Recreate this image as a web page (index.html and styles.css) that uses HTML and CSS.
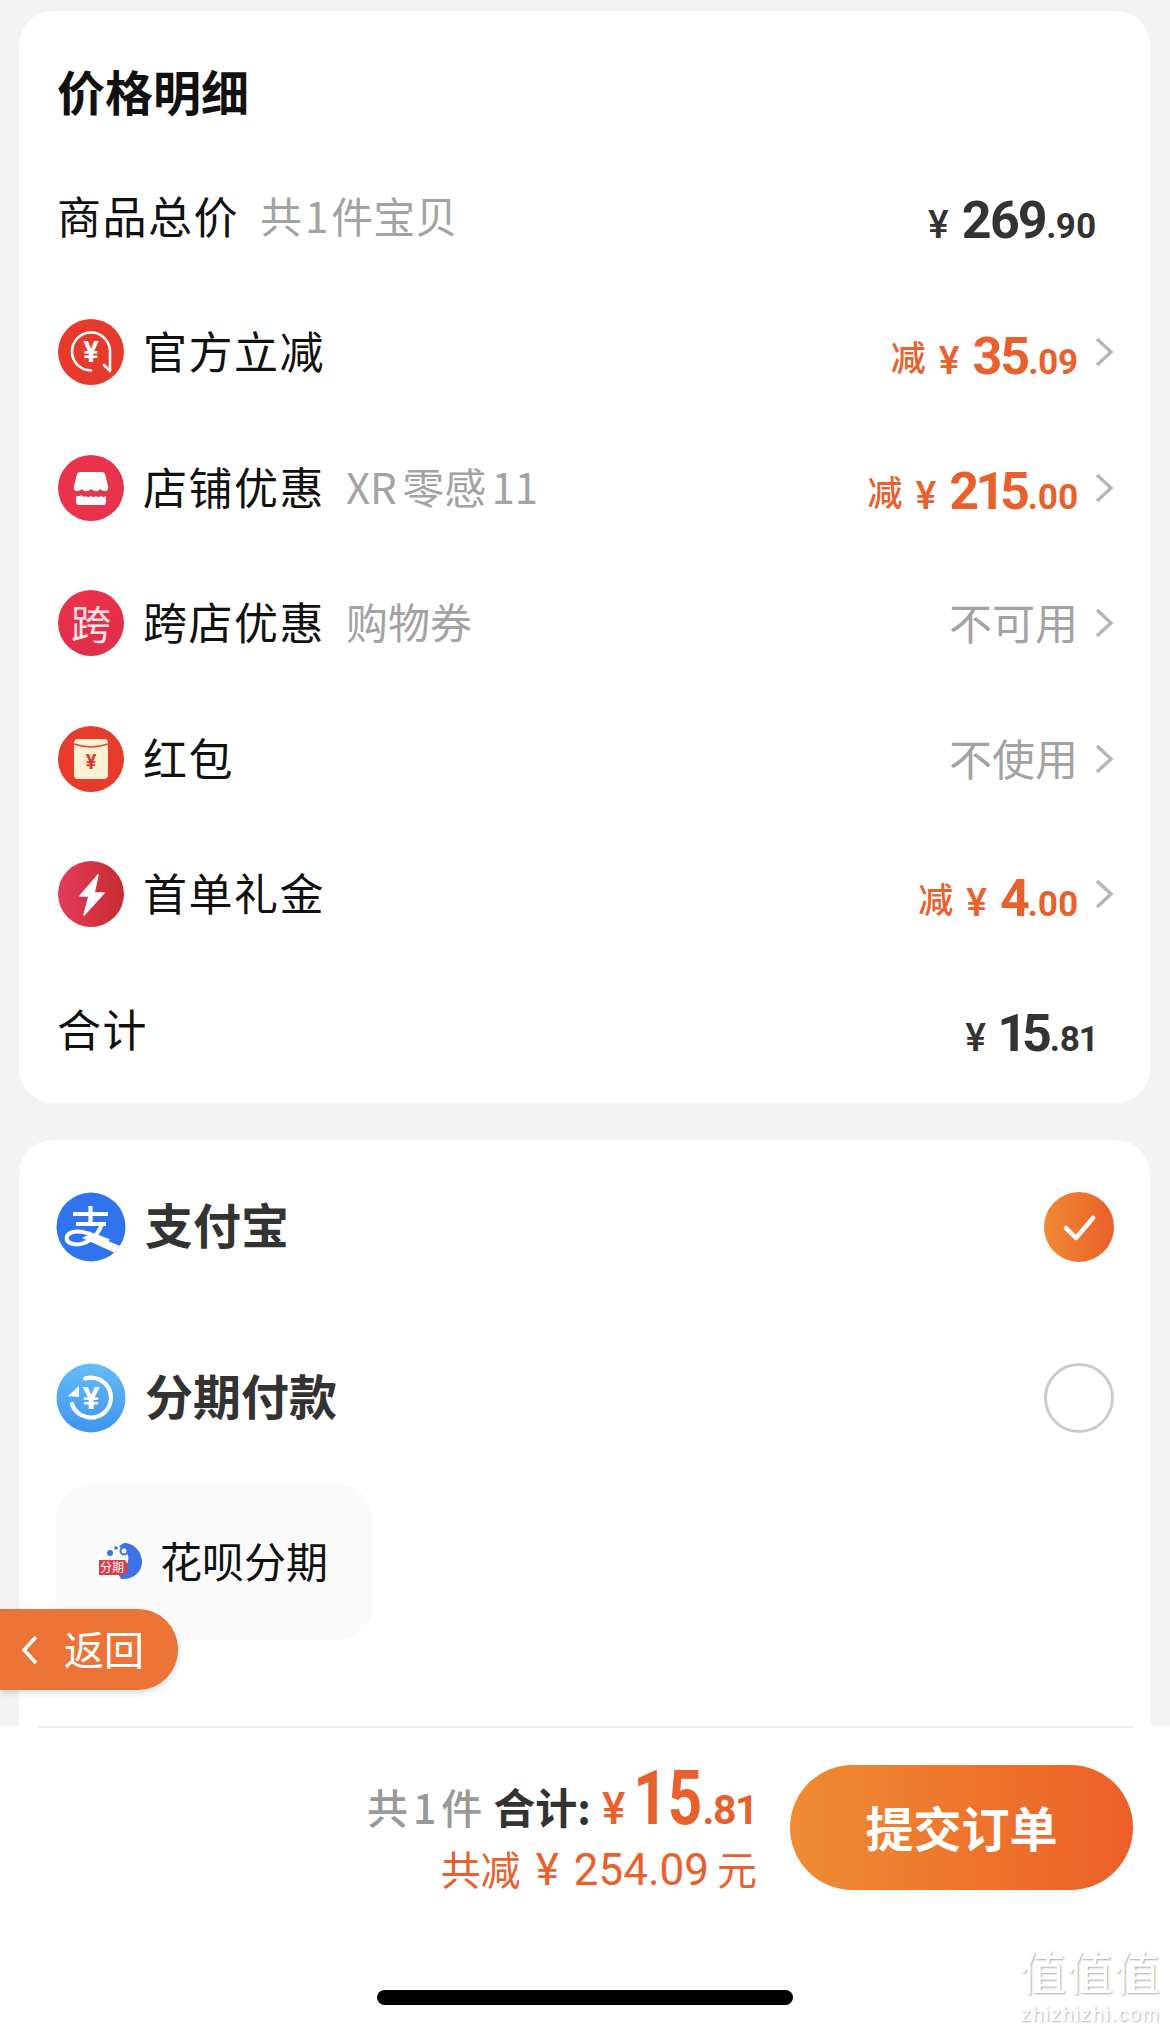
FILE: index.html
```html
<!DOCTYPE html>
<html lang="zh-CN">
<head>
  <meta charset="UTF-8">
  <title>确认订单</title>
  <link rel="stylesheet" href="styles.css">
</head>
<body>
  <div class="page">
    <section class="card price-card">
      <h2 class="card-title">价格明细</h2>

      <div class="row">
        <span class="label">商品总价</span>
        <span class="sub">共<i class="num">1</i>件宝贝</span>
        <span class="price plain"><span class="yen">¥</span><span class="int">269</span><span class="dec">.90</span></span>
      </div>

      <div class="row">
        <svg class="icon" viewBox="0 0 66 66">
          <circle cx="33" cy="33" r="33" fill="#e63a2c"/>
          <path d="M33 51.500a19 19 0 1 1 19-19v19" fill="none" stroke="#fff" stroke-width="2.6" stroke-linecap="round"/>
          <path d="M52 52l-6-6" fill="none" stroke="#fff" stroke-width="2.6" stroke-linecap="round"/>
          <text class="icon-yen" x="33" y="43" font-size="29" fill="#fff">¥</text>
        </svg>
        <span class="label">官方立减</span>
        <span class="price off"><span class="minus">减</span><span class="yen">¥</span><span class="int">35</span><span class="dec">.09</span></span>
        <svg class="chevron" viewBox="0 0 18 30"><path d="M2 2l14 13L2 28"/></svg>
      </div>

      <div class="row">
        <svg class="icon" viewBox="0 0 66 66">
          <circle cx="33" cy="33" r="33" fill="#e8334a"/>
          <path d="M22 17h22q2 0 3 2l3 12q1 5-3 5-3 0-5-2-2 3-5 2-2 0-4-2-2 2-4 2-3 1-5-2-2 2-5 2-4 0-3-5l3-12q1-2 3-2z" fill="#fff"/>
          <path d="M18 41q3 1 5-1 3 3 5 1 2 2 5 0 3 2 5 0 3 2 5 0 2 2 5 0v6q0 3-3 3H21q-3 0-3-3z" fill="#fff"/>
        </svg>
        <span class="label">店铺优惠</span>
        <span class="sub narrow">XR 零感 11</span>
        <span class="price off"><span class="minus">减</span><span class="yen">¥</span><span class="int">215</span><span class="dec">.00</span></span>
        <svg class="chevron" viewBox="0 0 18 30"><path d="M2 2l14 13L2 28"/></svg>
      </div>

      <div class="row">
        <span class="icon badge">跨</span>
        <span class="label">跨店优惠</span>
        <span class="sub">购物券</span>
        <span class="status">不可用</span>
        <svg class="chevron" viewBox="0 0 18 30"><path d="M2 2l14 13L2 28"/></svg>
      </div>

      <div class="row">
        <svg class="icon" viewBox="0 0 66 66">
          <circle cx="33" cy="33" r="33" fill="#e73b2c"/>
          <rect x="16" y="13" width="34" height="40" rx="4" fill="#fdf1d3"/>
          <path d="M16 18q17 6 34 0" fill="none" stroke="#e04a35" stroke-width="1.6"/>
          <text class="icon-yen" x="33" y="43" font-size="20" fill="#d8392b">¥</text>
        </svg>
        <span class="label">红包</span>
        <span class="status">不使用</span>
        <svg class="chevron" viewBox="0 0 18 30"><path d="M2 2l14 13L2 28"/></svg>
      </div>

      <div class="row">
        <svg class="icon" viewBox="0 0 66 66">
          <defs>
            <linearGradient id="boltBg" x1="0" x2="1" y1="0" y2="0">
              <stop offset="0" stop-color="#e33a5c"/>
              <stop offset="1" stop-color="#c72c2f"/>
            </linearGradient>
          </defs>
          <circle cx="33" cy="33" r="33" fill="url(#boltBg)"/>
          <path d="M40 14L22 35h9l-5 19 20-22H36z" fill="#fff" stroke="#fff" stroke-width="1.5" stroke-linejoin="round"/>
        </svg>
        <span class="label">首单礼金</span>
        <span class="price off"><span class="minus">减</span><span class="yen">¥</span><span class="int">4</span><span class="dec">.00</span></span>
        <svg class="chevron" viewBox="0 0 18 30"><path d="M2 2l14 13L2 28"/></svg>
      </div>

      <div class="row">
        <span class="label">合计</span>
        <span class="price plain"><span class="yen">¥</span><span class="int">15</span><span class="dec">.81</span></span>
      </div>
    </section>

    <section class="card pay-card">
      <div class="pay-row">
        <svg class="pay-icon" viewBox="0 0 70 70">
          <clipPath id="payClip"><circle cx="35" cy="35" r="34.500"/></clipPath>
          <circle cx="35" cy="35" r="34.500" fill="#2f74ee"/>
          <g clip-path="url(#payClip)">
            <path d="M17 22h35M20 32h30M34.500 14v18" fill="none" stroke="#fff" stroke-width="4.200"/>
            <path d="M46 32C41 47 27 54 17 52 8 50 9 42 17 40c9-2 20 3 36 9" fill="none" stroke="#fff" stroke-width="4"/>
            <path d="M34 42l38 15-4 8-42-19z" fill="#fff"/>
          </g>
        </svg>
        <span class="pay-name">支付宝</span>
        <span class="radio checked">
          <svg viewBox="0 0 70 70"><path d="M22 36l10 10 17-20" fill="none" stroke="#fff" stroke-width="4.500" stroke-linecap="round" stroke-linejoin="round"/></svg>
        </span>
      </div>

      <div class="pay-row">
        <svg class="pay-icon" viewBox="0 0 70 70">
          <defs>
            <linearGradient id="stageBg" x1="0" x2="0" y1="0" y2="1">
              <stop offset="0" stop-color="#66bdf5"/>
              <stop offset="1" stop-color="#3e94f0"/>
            </linearGradient>
          </defs>
          <circle cx="35" cy="35" r="34.500" fill="url(#stageBg)"/>
          <path d="M29 15.500A20 20 0 1 1 16 41" fill="none" stroke="#fff" stroke-width="4.200" stroke-linecap="round"/>
          <path d="M12 33l11-10v11z" fill="#fff"/>
          <text class="icon-yen" x="35" y="46" font-size="32" fill="#fff">¥</text>
        </svg>
        <span class="pay-name">分期付款</span>
        <span class="radio"></span>
      </div>

      <div class="chip">
        <svg class="chip-icon" viewBox="0 0 48 48">
          <path d="M27 5C38 5 45 15 45 24 45 34 36 42 24 41L18 30H27C31 26 32 21 31 17L22 8z" fill="#3c73e6"/>
          <circle cx="27" cy="13" r="3.500" fill="#fff" stroke="#3c73e6" stroke-width="2"/>
          <circle cx="13" cy="15" r="3" fill="#3c73e6"/>
          <circle cx="19" cy="10" r="1.800" fill="#3c73e6"/>
          <path d="M2 22h26q6 7 0 15H2z" fill="#dd3b45"/>
          <text class="tag-text" x="15" y="34" font-size="12" fill="#fff">分期</text>
        </svg>
        <span class="chip-name">花呗分期</span>
      </div>
    </section>

    <footer class="bottom-bar">
      <div class="divider"></div>
      <div class="checkout">
        <div class="summary">
          <div class="summary-main">
            <span class="count">共<i class="num">1</i>件</span>
            <span class="total-label">合计:</span>
            <span class="total"><span class="yen">¥</span><span class="int">15</span><span class="dec">.81</span></span>
          </div>
          <div class="summary-off">共减<span class="off-yen">¥</span><span class="off-num">254.09</span>元</div>
        </div>
        <button class="submit">提交订单</button>
      </div>
      <div class="home-bar"></div>
    </footer>

    <a class="back">
      <svg viewBox="0 0 20 32"><path d="M16 3L4 16l12 13"/></svg>
      <span>返回</span>
    </a>

    <div class="watermark">
      <div class="wm-big">值值值</div>
      <div class="wm-small">zhizhizhi.com</div>
    </div>
  </div>
</body>
</html>
```

FILE: styles.css
```css
* {
  box-sizing: border-box;
}
body {
  margin: 0;
  background-color: #f3f3f3;
  color: #111;
  font-family: "Noto Sans CJK SC", "Noto Sans", sans-serif;
}
i {
  font-style: normal;
}
.page {
  position: relative;
  display: flex;
  flex-direction: column;
  height: 2029px;
  overflow: hidden;
}
.card {
  background-color: #fff;
  margin: 0 20px 0 19px;
}
.price-card {
  margin-top: 11px;
  padding: 49px 37px 5px 38px;
  border-radius: 34px;
}
.card-title {
  margin: 0 0 29px;
  font-size: 48px;
  line-height: 60px;
  font-weight: 700;
}
.row {
  display: flex;
  align-items: center;
  height: 135.5px;
}
.icon {
  flex: none;
  width: 66px;
  height: 66px;
  margin: 0 19px 0 1px;
}
.icon-yen {
  font-family: Roboto, sans-serif;
  font-weight: 700;
  text-anchor: middle;
}
.badge {
  display: flex;
  align-items: center;
  justify-content: center;
  padding-bottom: 3px;
  border-radius: 50%;
  background: linear-gradient(160deg, #ee3048, #dc2f4c);
  color: #fbe3e6;
  font-size: 40px;
}
.label {
  margin-bottom: 4px;
  font-size: 44px;
  line-height: 60px;
  letter-spacing: 1.5px;
}
.sub {
  margin: 0 0 4px 21px;
  color: #a3a3a3;
  font-size: 42px;
  line-height: 60px;
}
.sub .num {
  margin: 0 3px;
}
.sub.narrow {
  word-spacing: -4px;
}
.price {
  margin-left: auto;
  padding-top: 20px;
  font-family: Roboto, sans-serif;
  font-weight: 700;
  font-variant-numeric: proportional-nums;
  line-height: 60px;
  white-space: nowrap;
}
.plain {
  margin-right: 17px;
  color: #333;
}
.off {
  color: #e8602c;
}
.minus {
  margin-right: 13px;
  font-family: "Noto Sans CJK SC", sans-serif;
  font-size: 35px;
  font-weight: 500;
  vertical-align: 3px;
}
.price .yen {
  margin-right: 13px;
  font-size: 39px;
  font-weight: 500;
}
.price .int {
  font-size: 52px;
  letter-spacing: -2px;
}
.price .dec {
  font-size: 35px;
  letter-spacing: -0.5px;
}
.status {
  margin: 0 0 4px auto;
  color: #a3a3a3;
  font-size: 43px;
}
.chevron {
  flex: none;
  width: 18px;
  height: 30px;
  margin-left: 17px;
}
.chevron path {
  fill: none;
  stroke: #b6b6b6;
  stroke-width: 3.4;
}
.pay-card {
  flex: 1;
  margin-top: 37px;
  padding: 37px 36px 0 37px;
  border-radius: 34px 34px 0 0;
}
.pay-row {
  display: flex;
  align-items: center;
  height: 100px;
  margin-bottom: 71px;
}
.pay-icon {
  flex: none;
  width: 70px;
  height: 70px;
  margin-right: 19px;
}
.pay-name {
  margin-bottom: 8px;
  color: #333;
  font-size: 48px;
  font-weight: 700;
}
.radio {
  width: 70px;
  height: 70px;
  margin-left: auto;
  border: 3px solid #ccc;
  border-radius: 50%;
}
.radio.checked {
  border: none;
  background: linear-gradient(90deg, #f08a35, #ea5f29);
}
.radio svg {
  display: block;
  width: 70px;
  height: 70px;
}
.chip {
  display: flex;
  align-items: center;
  width: 317px;
  height: 156px;
  margin-top: -35px;
  padding-left: 41px;
  border-radius: 36px;
  background-color: #fafafa;
}
.chip-icon {
  flex: none;
  width: 48px;
  height: 48px;
  margin-right: 15px;
}
.tag-text {
  font-family: "Noto Sans CJK SC", sans-serif;
  text-anchor: middle;
}
.chip-name {
  margin-bottom: 5px;
  font-size: 42px;
}
.bottom-bar {
  display: flex;
  flex-direction: column;
  height: 303px;
  background-color: #fff;
}
.divider {
  height: 2px;
  margin: 0 37px;
  background-color: #eee;
}
.checkout {
  display: flex;
  justify-content: flex-end;
  gap: 33px;
  height: 125px;
  margin-top: 37px;
  padding-right: 37px;
}
.summary {
  margin-top: -3px;
  text-align: right;
}
.summary-main {
  display: flex;
  align-items: baseline;
  justify-content: flex-end;
  height: 73px;
  font-size: 41px;
}
.count {
  color: #999;
  font-weight: 500;
  margin-right: 11px;
}
.count .num {
  margin: 0 5px;
}
.total-label {
  margin-right: 11px;
  color: #333;
  font-weight: 700;
  font-size: 42px;
}
.total {
  color: #e8602c;
  font-family: Roboto, sans-serif;
  font-weight: 700;
}
.total .yen {
  margin-right: 8px;
  font-size: 44px;
  font-weight: 500;
}
.total .int {
  display: inline-block;
  margin-left: -18px;
  font-size: 76px;
  line-height: 73px;
  transform: scaleX(0.79);
  transform-origin: 100% 50%;
}
.total .dec {
  font-size: 41px;
  letter-spacing: -1.5px;
}
.summary-off {
  margin-top: 8px;
  color: #e8602c;
  font-size: 40px;
  line-height: 50px;
}
.off-yen {
  margin: 0 15px 0 15px;
  font-family: Roboto, sans-serif;
  font-size: 44px;
}
.off-num {
  margin-right: 8px;
  font-family: Roboto, sans-serif;
  font-size: 44px;
}
.submit {
  width: 343px;
  height: 125px;
  padding-bottom: 4px;
  border: none;
  border-radius: 63px;
  background: linear-gradient(90deg, #ef8c33, #ec5f28);
  color: #fff;
  font-family: "Noto Sans CJK SC", sans-serif;
  font-size: 48px;
  font-weight: 700;
}
.home-bar {
  align-self: center;
  width: 416px;
  height: 15px;
  margin-top: 100px;
  border-radius: 8px;
  background-color: #000;
}
.back {
  position: absolute;
  left: 0;
  top: 1609px;
  display: flex;
  align-items: center;
  width: 178px;
  height: 81px;
  padding-left: 20px;
  border-radius: 0 40px 40px 0;
  background-color: #ec7336;
  box-shadow: 0 3px 6px rgba(0,0,0,0.15);
  color: #fff;
  font-size: 40px;
}
.back span {
  margin-bottom: 4px;
}
.back svg {
  width: 20px;
  height: 32px;
  margin-right: 24px;
}
.back path {
  fill: none;
  stroke: #fff;
  stroke-width: 3.5;
}
.watermark {
  position: absolute;
  right: 9px;
  top: 1937px;
  color: #fff;
  text-align: center;
  text-shadow: 1px 1px 2px #aaa;
}
.wm-big {
  font-size: 46px;
  line-height: 66px;
  letter-spacing: 1px;
}
.wm-small {
  font-family: "Liberation Sans", sans-serif;
  font-size: 20px;
  line-height: 23px;
  letter-spacing: 1.500px;
}
```
